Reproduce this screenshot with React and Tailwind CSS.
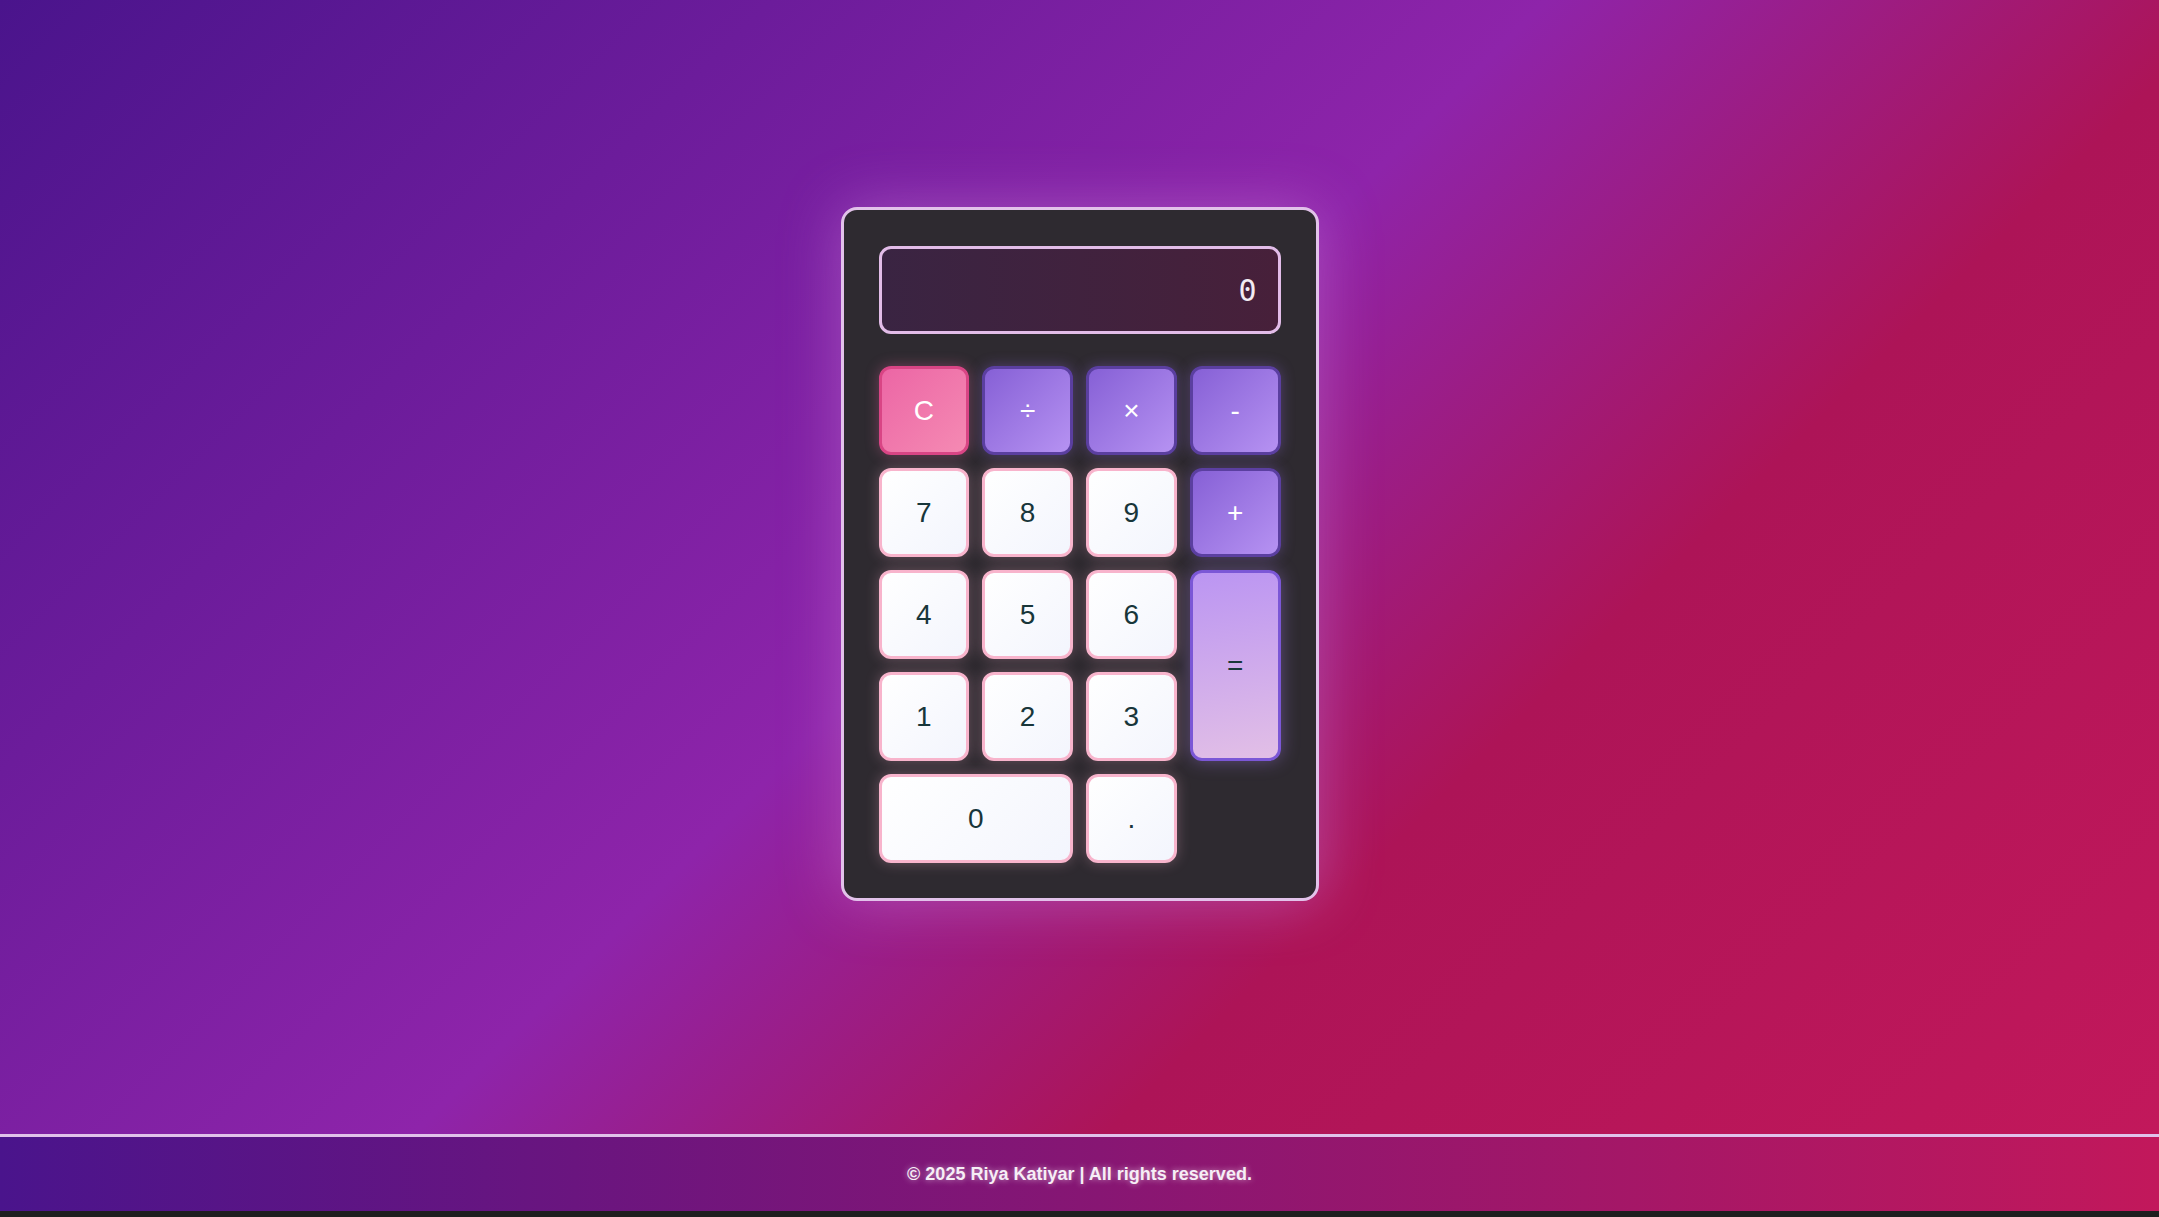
export default function App() {
  const btn = 'flex items-center justify-center rounded-[12px] border-[3px] text-[28px] font-["Liberation_Sans",Arial,sans-serif] h-[89px]'
  const num = `${btn} border-[#f8b4cc] bg-[linear-gradient(135deg,#ffffff,#f3f5fd)] text-[#18363a] shadow-[0_0_14px_rgba(248,180,204,0.3)]`
  const op = `${btn} border-[#5b3fa0] bg-[linear-gradient(135deg,#8660d6,#b692f2)] text-white shadow-[0_0_14px_rgba(150,110,230,0.35)]`

  return (
    <div className="min-h-screen bg-[#1e1e1e]">
      <div className="h-[1211px] flex flex-col font-['Liberation_Sans',Arial,sans-serif]">
        {/* main area */}
        <main className="flex-1 flex items-start justify-center pt-[207px] bg-[linear-gradient(135deg,#4a148c_0%,#8e24aa_47%,#ad1457_68%,#c2185b_100%)]">
          <div className="w-[478px] rounded-[16px] border-[3px] border-[#e2c2ea] bg-[#2e2a30] px-[35px] pt-[36px] pb-[35px] shadow-[0_0_60px_rgba(206,130,220,0.45)]">
            <div className="h-[88px] rounded-[12px] border-[3px] border-[#e2bce8] bg-[linear-gradient(90deg,#3a2442,#47203a)] flex items-center justify-end pr-[21px]">
              <span className="font-['DejaVu_Sans_Mono',monospace] text-[30px] text-[#f3ecf3]">0</span>
            </div>

            <div className="mt-[32px] grid grid-cols-4 gap-[13px]">
              <button className={`${btn} border-[#d94585] bg-[linear-gradient(135deg,#ec66a5,#f58ab3)] text-white shadow-[0_0_14px_rgba(240,110,170,0.35)]`}>C</button>
              <button className={op}>÷</button>
              <button className={op}>×</button>
              <button className={op}>-</button>

              <button className={num}>7</button>
              <button className={num}>8</button>
              <button className={num}>9</button>
              <button className={op}>+</button>

              <button className={num}>4</button>
              <button className={num}>5</button>
              <button className={num}>6</button>
              <button className="flex items-center justify-center rounded-[12px] border-[3px] text-[28px] row-span-2 h-full border-[#7b57d6] bg-[linear-gradient(170deg,#bb95f2,#e2bfe6)] text-[#18363a] shadow-[0_0_18px_rgba(170,130,240,0.4)]">=</button>

              <button className={num}>1</button>
              <button className={num}>2</button>
              <button className={num}>3</button>

              <button className={`${num} col-span-2`}>0</button>
              <button className={num}>.</button>
            </div>
          </div>
        </main>

        {/* footer */}
        <footer className="h-[77px] border-t-[3px] border-[#e0c2ea] bg-[linear-gradient(90deg,#4a148c,#c2185b)] flex items-center justify-center">
          <p className="text-[18px] font-bold text-[#f6eef6] [text-shadow:0_0_6px_rgba(255,255,255,0.6)]">
            © 2025 Riya Katiyar | All rights reserved.
          </p>
        </footer>
      </div>
    </div>
  )
}
